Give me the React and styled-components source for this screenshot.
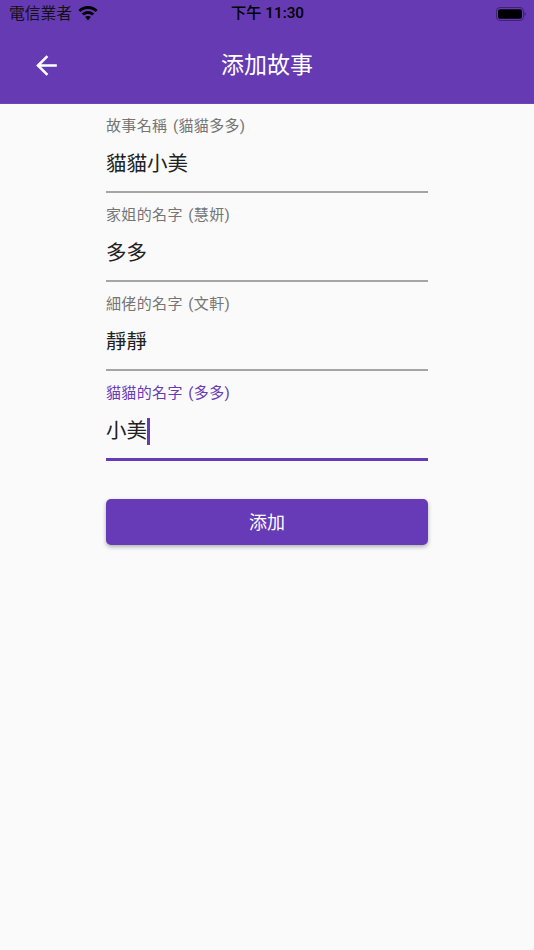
import React from 'react';
import styled, { createGlobalStyle } from 'styled-components';

const GlobalStyle = createGlobalStyle`
  html, body {
    margin: 0;
    padding: 0;
    background: #fafafa;
  }
  * {
    box-sizing: border-box;
  }
`;

const Page = styled.div`
  width: 534px;
  height: 950px;
  overflow: hidden;
  background: #fafafa;
  font-family: 'Roboto', 'Noto Sans CJK TC', sans-serif;
`;

const Header = styled.header`
  height: 104px;
  background: #653ab3;
  border-bottom: 1px solid #6d44ba;
`;

const StatusBar = styled.div`
  height: 27px;
  display: grid;
  grid-template-columns: 1fr auto 1fr;
  align-items: center;
  padding: 0 8px 0 9px;
  color: #111;
  font-size: 15.75px;
  line-height: 27px;
`;

const Carrier = styled.div`
  display: flex;
  align-items: center;
  gap: 6px;
`;

const Clock = styled.div`
  font-size: 15.25px;
  font-weight: 500;
  color: #000;
`;

const Battery = styled.div`
  justify-self: end;
  display: flex;
  align-items: center;
`;

const AppBar = styled.div`
  height: 76px;
  display: grid;
  grid-template-columns: 1fr auto 1fr;
  align-items: center;
`;

const BackButton = styled.div`
  display: flex;
  padding-left: 31px;
  color: #fff;
`;

const Title = styled.h1`
  margin: 0 0 4px;
  font-size: 23px;
  font-weight: 400;
  color: #fff;
`;

const Form = styled.main`
  width: 322px;
  margin: 0 auto;
`;

const Field = styled.div`
  height: ${(p) => (p.$active ? '90px' : '89px')};
  padding-top: 11px;
  border-bottom: ${(p) => (p.$active ? '3px solid #673ab7' : '2px solid #a5a5a5')};
`;

const Label = styled.div`
  font-size: 15px;
  line-height: 22px;
  letter-spacing: 0.35px;
  word-spacing: 1.5px;
  color: ${(p) => (p.$active ? '#673ab7' : '#757575')};
`;

const Value = styled.div`
  margin-top: 8px;
  font-size: 20.5px;
  line-height: 38px;
  color: #212121;
  display: flex;
  align-items: center;
`;

const Caret = styled.span`
  width: 3px;
  height: 27px;
  background: #673ab7;
`;

const SubmitButton = styled.button`
  display: block;
  width: 100%;
  height: 46px;
  margin-top: 38px;
  padding: 0 0 3px;
  border: 0;
  border-radius: 5px;
  background: #673ab7;
  color: #fff;
  font-family: inherit;
  font-size: 18px;
  box-shadow: 0 2px 4px rgba(0, 0, 0, 0.3);
`;

const fields = [
  { label: '故事名稱 (貓貓多多)', value: '貓貓小美' },
  { label: '家姐的名字 (慧妍)', value: '多多' },
  { label: '細佬的名字 (文軒)', value: '靜靜' },
  { label: '貓貓的名字 (多多)', value: '小美', active: true },
];

function WifiIcon() {
  return (
    <svg width="20" height="15" viewBox="0 0 20 15">
      <path d="M10 0C6.200 0 2.900 1.500.4 3.900l2 2.100C4.400 4.100 7 3 10 3s5.600 1.100 7.600 3l2-2.100C17.100 1.500 13.800 0 10 0z" fill="#000" />
      <path d="M10 5C7.600 5 5.400 5.900 3.800 7.500l2.100 2.100C7 8.600 8.400 8 10 8s3 .6 4.100 1.600l2.100-2.100C14.600 5.900 12.400 5 10 5z" fill="#000" />
      <path d="M10 10c-1.100 0-2.100.4-2.800 1.100L10 14.500l2.800-3.400C12.100 10.400 11.100 10 10 10z" fill="#000" />
    </svg>
  );
}

function BatteryIcon() {
  return (
    <svg width="30" height="14" viewBox="0 0 30 14">
      <rect x="0.5" y="0.5" width="27" height="13" rx="3.5" fill="none" stroke="#3f2372" />
      <rect x="2" y="2.300" width="24" height="9.400" rx="2" fill="#000" />
      <path d="M28.500 5v4c.8-.3 1.300-1.100 1.300-2s-.5-1.700-1.300-2z" fill="#3f2372" />
    </svg>
  );
}

function BackArrow() {
  return (
    <svg width="31" height="31" viewBox="0 0 24 24" fill="currentColor">
      <path d="M20 11H7.830l5.590-5.590L12 4l-8 8 8 8 1.410-1.410L7.830 13H20v-2z" />
    </svg>
  );
}

export default function App() {
  return (
    <Page>
      <GlobalStyle />
      <Header>
        <StatusBar>
          <Carrier>
            電信業者
            <WifiIcon />
          </Carrier>
          <Clock>下午 11:30</Clock>
          <Battery>
            <BatteryIcon />
          </Battery>
        </StatusBar>
        <AppBar>
          <BackButton>
            <BackArrow />
          </BackButton>
          <Title>添加故事</Title>
        </AppBar>
      </Header>
      <Form>
        {fields.map((f) => (
          <Field key={f.label} $active={f.active}>
            <Label $active={f.active}>{f.label}</Label>
            <Value>
              {f.value}
              {f.active && <Caret />}
            </Value>
          </Field>
        ))}
        <SubmitButton>添加</SubmitButton>
      </Form>
    </Page>
  );
}
